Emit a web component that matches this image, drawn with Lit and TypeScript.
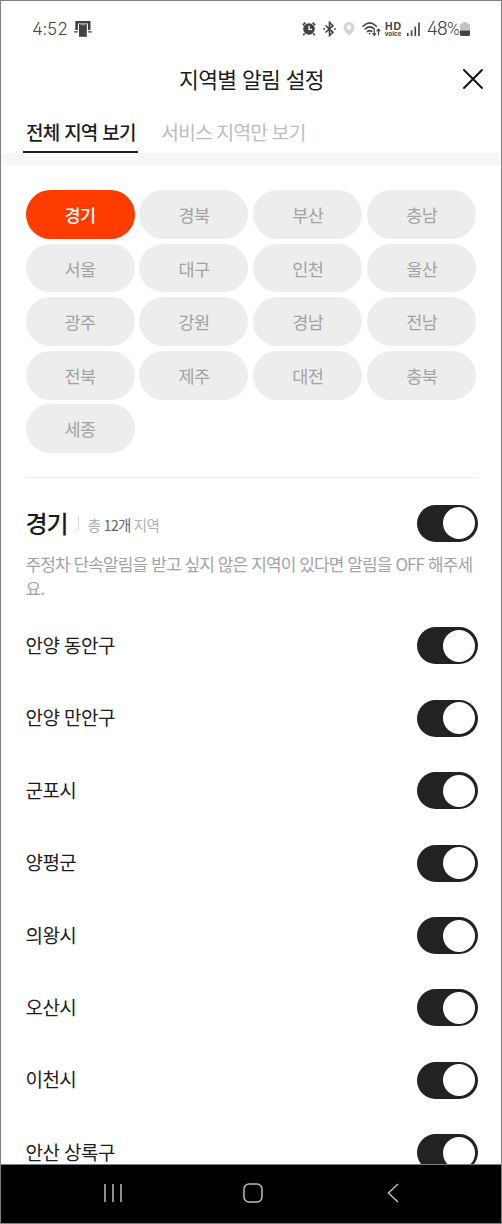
import { LitElement, html, css, svg } from "lit";
import { customElement, property, state } from "lit/decorators.js";
import { classMap } from "lit/directives/class-map.js";

const REGIONS = [
  "경기", "경북", "부산", "충남",
  "서울", "대구", "인천", "울산",
  "광주", "강원", "경남", "전남",
  "전북", "제주", "대전", "충북",
  "세종",
];

const DISTRICTS = [
  "안양 동안구", "안양 만안구", "군포시", "양평군",
  "의왕시", "오산시", "이천시", "안산 상록구",
];

@customElement("status-bar")
export class StatusBar extends LitElement {
  static styles = css`
    :host {
      display: flex;
      justify-content: space-between;
      height: 52px;
      padding: 0 31px 0 31px;
      box-sizing: border-box;
      color: #424242;
      font-family: Inter, "Noto Sans CJK KR", sans-serif;
      font-feature-settings: "cv02", "tnum";
      font-weight: 300;
    }
    .side { display: flex; align-items: center; height: 56px; }
    .clock { font-size: 17px; line-height: 20px; width: 42px; letter-spacing: -0.4px; white-space: nowrap; }
    .battery { font-size: 18px; line-height: 20px; width: 33.5px; letter-spacing: -1.6px; white-space: nowrap; }
    .percent { font-family: Roboto, sans-serif; font-size: 17.5px; letter-spacing: 0; margin-left: 0.5px; }
    .hd {
      display: flex;
      flex-direction: column;
      align-items: center;
      width: 17px;
      margin: 0 5px 0 4px;
      font-family: "Liberation Sans", sans-serif;
      font-weight: 700;
    }
    .hd-top { font-size: 10.5px; line-height: 9px; letter-spacing: 0.8px; margin-right: -0.8px; }
    .hd-bottom { font-size: 6.5px; line-height: 5px; }
    svg { display: block; flex: none; }
    .alarm { margin-right: 7px; }
    .bluetooth { margin-right: 7px; }
    .pin { margin-right: 7px; }
    .signal { margin-right: 7px; }
  `;

  render() {
    return html`
      <div class="side">
        <span class="clock">4:52</span>
        <svg width="18" height="18" viewBox="0 0 18 18" fill="#424242">
          <path d="M1.3 1h15.2v9h-2.6V3.6H3.9V10H1.3z" />
          <path d="M5 4h7.800v12.800H5z" />
          <path d="M6.500 4.300q2.400 1.300 4.800 0" fill="none" stroke="#bbb" stroke-width=".9" />
          <path d="M0 11.2h3.800v1.3H0zM14 11.2h3.800v1.3H14z" />
        </svg>
      </div>
      <div class="side">
        <svg class="alarm" width="14" height="16" viewBox="0 0 14 16">
          <circle cx="7" cy="8" r="5.8" fill="#424242" />
          <path d="M.8 4.2 3.4 1.7M13.2 4.2 10.6 1.7M2.8 12.5 1.2 14.2M11.2 12.5l1.6 1.7" stroke="#424242" stroke-width="1.7" fill="none" />
          <path d="M7 4.8v3.6h3" stroke="#fff" stroke-width="1.3" fill="none" />
        </svg>
        <svg class="bluetooth" width="13" height="16" viewBox="0 0 13 16" fill="none" stroke="#424242" stroke-width="1.6">
          <path d="M2.500 4.500 10 11.3 6.500 14.5V1.5L10 4.700 2.500 11.5" />
          <path d="M.1 7.2h1.9v1.6H.1zM10.9 7.2h1.9v1.6h-1.9z" fill="#424242" stroke="none" />
        </svg>
        <svg class="pin" width="12" height="16" viewBox="0 0 12 16">
          <path fill="#d4d4d4" fill-rule="evenodd" d="M6 1a5.5 5.5 0 0 1 5.5 5.5C11.500 10 8 12.500 6 15 4 12.500.5 10 .5 6.500A5.500 5.500 0 0 1 6 1zm0 3.300a2.200 2.200 0 1 0 0 4.400 2.200 2.200 0 0 0 0-4.400z" />
        </svg>
        <svg width="19" height="16" viewBox="0 0 19 16" fill="none" stroke="#424242" stroke-width="1.6" stroke-linecap="round">
          <path d="M1 5.200q6.700-6.500 13.400 0M3.200 8q4.500-4.400 9 0M5.400 10.600q2.300-2 4.300-.2" />
          <circle cx="7.600" cy="12.600" r=".9" fill="#424242" stroke="none" />
          <path stroke-width="1.200" d="M12.300 9v5M10.800 12.700l1.500 1.600 1.500-1.600M16.500 14V8.300M15 9.800l1.500-1.600L18 9.800" />
        </svg>
        <div class="hd"><span class="hd-top">HD</span><span class="hd-bottom">voice</span></div>
        <svg class="signal" width="13" height="16" viewBox="0 0 13 16" fill="#424242">
          <path d="M0 12h1.600v3H0zM3.800 9.300h1.600V15H3.800zM7.500 5.500h1.600V15H7.500zM11.200 1.500h1.600V15h-1.600z" />
        </svg>
        <span class="battery">48<span class="percent">%</span></span>
        <svg width="10" height="16" viewBox="0 0 10 16">
          <path fill="#c4c4c4" d="M3 1h4v1.500h1.500Q10 2.500 10 4v5.500H0V4q0-1.500 1.500-1.500H3z" />
          <path fill="#424242" d="M0 9.500h10v4q0 1.500-1.500 1.500h-7Q0 15 0 13.500z" />
        </svg>
      </div>
    `;
  }
}

@customElement("toggle-switch")
export class ToggleSwitch extends LitElement {
  @property({ type: Boolean }) on = true;

  static styles = css`
    :host { display: block; flex: none; }
    .track {
      display: flex;
      align-items: center;
      width: 61px;
      height: 37px;
      padding: 0 2.500px;
      box-sizing: border-box;
      border: 0;
      border-radius: 19px;
      background: #ccc;
    }
    .track.on { justify-content: flex-end; background: #222; }
    .knob { width: 32px; height: 32px; border-radius: 50%; background: #fff; }
  `;

  render() {
    return html`<button
      class=${classMap({ track: true, on: this.on })}
      role="switch"
      aria-checked=${this.on}
      @click=${() => (this.on = !this.on)}
    ><span class="knob"></span></button>`;
  }
}

@customElement("app-root")
export class AppRoot extends LitElement {
  @state() private region = "경기";
  @state() private tab = 0;

  static styles = css`
    :host {
      display: flex;
      flex-direction: column;
      width: 502px;
      height: 1224px;
      box-sizing: border-box;
      border: 1px solid #7f7f7f;
      overflow: hidden;
      background: #fff;
      color: #1c1c1c;
      font-family: "Noto Sans CJK KR", sans-serif;
    }
    button { border: 0; padding: 0; background: none; font: inherit; color: inherit; }
    status-bar { flex: none; }
    .header {
      display: grid;
      grid-template-columns: 60px 1fr 60px;
      align-items: center;
      flex: none;
      height: 54px;
    }
    .title {
      grid-column: 2;
      margin: 0;
      padding: 0 0 2px 1px;
      text-align: center;
      font-size: 21.5px;
      font-weight: 400;
      line-height: 30px;
      letter-spacing: -0.7px;
      word-spacing: 1.500px;
    }
    .close { display: flex; justify-content: center; padding: 0 0 2px 3px; }
    .tabs {
      display: flex;
      flex: none;
      gap: 20px;
      height: 46px;
      padding-left: 22px;
    }
    .tab {
      height: 46px;
      box-sizing: border-box;
      padding: 5px 0 0 3px;
      border-bottom: 2px solid transparent;
      font-size: 19.5px;
      line-height: 39px;
      letter-spacing: -0.9px;
      color: #bdbdbd;
      white-space: nowrap;
      word-spacing: 0.700px;
    }
    .tab.active {
      width: 115px;
      border-color: #1c1c1c;
      color: #1c1c1c;
      font-weight: 500;
      font-size: 19px;
      letter-spacing: -0.800px;
      word-spacing: 1.300px;
      text-align: left;
    }
    .band { flex: none; height: 13px; background: #f7f7f7; }
    .content {
      flex: 1;
      min-height: 0;
      overflow: hidden;
      padding: 24px 24px 0 24.500px;
    }
    .chips {
      display: grid;
      grid-template-columns: repeat(4, 109px);
      grid-auto-rows: 48.800px;
      gap: 4.800px 4.900px;
    }
    .chip {
      border-radius: 25px;
      background: #ededed;
      color: #a3a3a3;
      font-size: 17.500px;
      line-height: 50px;
      letter-spacing: -0.600px;
    }
    .chip.active { background: #ff3c00; color: #fff; font-weight: 500; }
    .divider { height: 1px; margin-top: 23.600px; background: #ededed; }
    .section {
      display: flex;
      align-items: center;
      height: 37px;
      margin: 27px -0.500px 0 0;
    }
    .name {
      margin: 0;
      font-size: 24px;
      font-weight: 500;
      line-height: 36px;
      letter-spacing: -1px;
    }
    .bar { width: 1px; height: 14px; margin: 0 9px 0 10px; background: #d9d9d9; }
    .count {
      flex: 1;
      padding-top: 3px;
      font-size: 14.500px;
      line-height: 20px;
      letter-spacing: -0.750px;
      word-spacing: 0.700px;
      color: #b0b0b0;
    }
    .number { color: #666; }
    .note {
      width: 452px;
      margin: 10px 0 0;
      font-size: 17px;
      line-height: 24.500px;
      letter-spacing: -0.900px;
      word-spacing: 0.950px;
      color: #a3a3a3;
      word-break: break-all;
    }
    .rows { margin: 9px -0.500px 0 0; }
    .row {
      display: flex;
      align-items: center;
      justify-content: space-between;
      height: 72.400px;
      font-size: 19px;
      line-height: 28px;
      letter-spacing: -0.600px;
      word-spacing: 1.200px;
    }
    .label { padding-bottom: 2px; }
    .nav {
      display: flex;
      align-items: center;
      flex: none;
      justify-content: space-between;
      height: 59px;
      box-sizing: border-box;
      padding: 0 98px 3px 102px;
      background: #000;
      border-top: 1px solid #7f7f7f;
    }
    svg { display: block; }
  `;

  private navIcon(shape: unknown) {
    return html`<svg width="20" height="20" viewBox="0 0 20 20" fill="none" stroke="#bdbdbd" stroke-width="1.5">${shape}</svg>`;
  }

  render() {
    return html`
      <status-bar></status-bar>
      <header class="header">
        <h1 class="title">지역별 알림 설정</h1>
        <button class="close" aria-label="닫기">
          <svg width="20" height="20" viewBox="0 0 20 20" fill="none" stroke="#111" stroke-width="1.900" stroke-linecap="round">
            <path d="M1 1l18 18M19 1 1 19" />
          </svg>
        </button>
      </header>
      <nav class="tabs">
        ${["전체 지역 보기", "서비스 지역만 보기"].map(
          (label, i) => html`<button
            class=${classMap({ tab: true, active: i === this.tab })}
            @click=${() => (this.tab = i)}
          >${label}</button>`
        )}
      </nav>
      <div class="band"></div>
      <main class="content">
        <div class="chips">
          ${REGIONS.map(
            (name) => html`<button
              class=${classMap({ chip: true, active: name === this.region })}
              @click=${() => (this.region = name)}
            >${name}</button>`
          )}
        </div>
        <div class="divider"></div>
        <div class="section">
          <h2 class="name">${this.region}</h2>
          <span class="bar"></span>
          <span class="count">총 <span class="number">12개</span> 지역</span>
          <toggle-switch></toggle-switch>
        </div>
        <p class="note">주정차 단속알림을 받고 싶지 않은 지역이 있다면 알림을 OFF 해주세요.</p>
        <div class="rows">
          ${DISTRICTS.map(
            (name) => html`<div class="row"><span class="label">${name}</span><toggle-switch></toggle-switch></div>`
          )}
        </div>
      </main>
      <footer class="nav">
        ${this.navIcon(svg`<path d="M2 1v18M10 1v18M18 1v18" />`)}
        ${this.navIcon(svg`<rect x="1" y="1" width="18" height="18" rx="5" />`)}
        ${this.navIcon(svg`<path d="M15 1 5.500 10l9.500 9" />`)}
      </footer>
    `;
  }
}
